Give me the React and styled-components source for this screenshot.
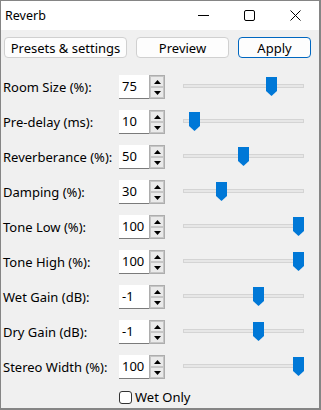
import React, { useState } from 'react'
import styled, { createGlobalStyle } from 'styled-components';

const GlobalStyle = createGlobalStyle`
  body {
    margin: 0;
    font-family: "Noto Sans", "Open Sans", sans-serif;
    font-size: 13px;
    color: #000;
  }
`;

const Window = styled.div`
  width: 321px;
  height: 410px;
  box-sizing: border-box;
  border-style: solid;
  border-color: #858585;
  border-width: 1px 2px 2px 1px;
  background: #f0f0f0;
  display: flex;
  flex-direction: column;
  overflow: hidden;
`;

const TitleBar = styled.div`
  height: 29px;
  background: #fff;
  display: flex;
  align-items: center;
  padding-left: 4px;
  padding-right: 1px;
`;

const Title = styled.div`
  flex: 1;
  font-size: 12.5px;
`;

const Caption = styled.div`
  width: 46px;
  height: 29px;
  display: flex;
  align-items: center;
  justify-content: center;
`;

const ButtonBar = styled.div`
  display: flex;
  gap: 9px;
  padding: 7px 0 0 3px;
`;

const Button = styled.button`
  width: ${p => p.$w}px;
  height: 21px;
  box-sizing: border-box;
  padding: 0;
  font-family: inherit;
  font-size: 13px;
  color: #000;
  background: #fdfdfd;
  border: 1px solid ${p => (p.$primary ? '#0067c0' : '#d0d0d0')};
  border-radius: 4px;
  line-height: 18px;
`;

const Rows = styled.div`
  display: flex;
  flex-direction: column;
  gap: 11px;
  padding: 17px 0 0 2px;
`;

const Row = styled.div`
  display: flex;
  align-items: center;
  height: 24px;
`;

const Label = styled.div`
  width: 116px;
  white-space: nowrap;
`;

const Field = styled.div`
  width: 30px;
  height: 24px;
  box-sizing: border-box;
  background: #fff;
  border-bottom: 1px solid #7a7a7a;
  padding-left: 3px;
  line-height: 23px;
`;

const Spin = styled.div`
  width: 16px;
  height: 24px;
  box-sizing: border-box;
  border: 1px solid #adadad;
  display: flex;
  flex-direction: column;
`;

const SpinButton = styled.div`
  flex: 1;
  border: 1px solid #c6c6c6;
  background: #eaeaea;
  display: flex;
  align-items: center;
  justify-content: center;
`;

const Slider = styled.div`
  position: relative;
  margin-left: 18px;
  width: 121px;
  height: 24px;
`;

const Track = styled.div`
  position: absolute;
  left: 0;
  right: 0;
  top: 9px;
  height: 4px;
  box-sizing: border-box;
  border: 1px solid #d4d4d4;
  background: #e7e7e7;
`;

const Thumb = styled.svg`
  position: absolute;
  top: 2px;
`;

const Footer = styled.label`
  display: flex;
  align-items: center;
  gap: 3px;
  padding: 9px 0 0 118px;
`;

const Check = styled.span`
  width: 13px;
  height: 13px;
  box-sizing: border-box;
  border: 1px solid #333;
  border-radius: 3px;
  background: #fff;
`;

const params = [
  { name: 'Room Size (%):', value: 75, min: 0, max: 100 },
  { name: 'Pre-delay (ms):', value: 10, min: 0, max: 200 },
  { name: 'Reverberance (%):', value: 50, min: 0, max: 100 },
  { name: 'Damping (%):', value: 30, min: 0, max: 100 },
  { name: 'Tone Low (%):', value: 100, min: 0, max: 100 },
  { name: 'Tone High (%):', value: 100, min: 0, max: 100 },
  { name: 'Wet Gain (dB):', value: -1, min: -20, max: 10 },
  { name: 'Dry Gain (dB):', value: -1, min: -20, max: 10 },
  { name: 'Stereo Width (%):', value: 100, min: 0, max: 100 },
];

const Arrow = ({ up }) => (
  <svg width="7" height="4" viewBox="0 0 7 4">
    <path d={up ? 'M0 4 L3.5 0 L7 4 Z' : 'M0 0 L3.5 4 L7 0 Z'} fill="#000" />
  </svg>
);

const ParamRow = ({ p }) => {
  const f = (p.value - p.min) / (p.max - p.min);
  return (
    <Row>
      <Label>{p.name}</Label>
      <Field>{p.value}</Field>
      <Spin>
        <SpinButton><Arrow up /></SpinButton>
        <SpinButton><Arrow /></SpinButton>
      </Spin>
      <Slider>
        <Track />
        <Thumb width="11" height="19" viewBox="0 0 11 19" style={{ left: Math.round(f * 110) }}>
          <path d="M0 0 H11 V14 L5.5 19 L0 14 Z" fill="#0078d7" />
        </Thumb>
      </Slider>
    </Row>
  );
};

export default function App() {
  const [wetOnly] = useState(false);
  return (
    <>
      <GlobalStyle />
      <Window>
        <TitleBar>
          <Title>Reverb</Title>
          <Caption>
            <svg width="11" height="11" viewBox="0 0 11 11">
              <path d="M0 5.5 H11" stroke="#000" strokeWidth="1" />
            </svg>
          </Caption>
          <Caption>
            <svg width="11" height="11" viewBox="0 0 11 11">
              <rect x="0.5" y="0.5" width="10" height="10" rx="1.5" fill="none" stroke="#000" />
            </svg>
          </Caption>
          <Caption>
            <svg width="11" height="11" viewBox="0 0 11 11">
              <path d="M0.5 0.5 L10.5 10.5 M10.5 0.5 L0.5 10.5" stroke="#000" />
            </svg>
          </Caption>
        </TitleBar>
        <ButtonBar>
          <Button $w={123}>Presets &amp; settings</Button>
          <Button $w={93}>Preview</Button>
          <Button $w={73} $primary>Apply</Button>
        </ButtonBar>
        <Rows>
          {params.map(p => <ParamRow key={p.name} p={p} />)}
        </Rows>
        <Footer>
          <Check>{wetOnly ? '✓' : ''}</Check>
          Wet Only
        </Footer>
      </Window>
    </>
  );
}
